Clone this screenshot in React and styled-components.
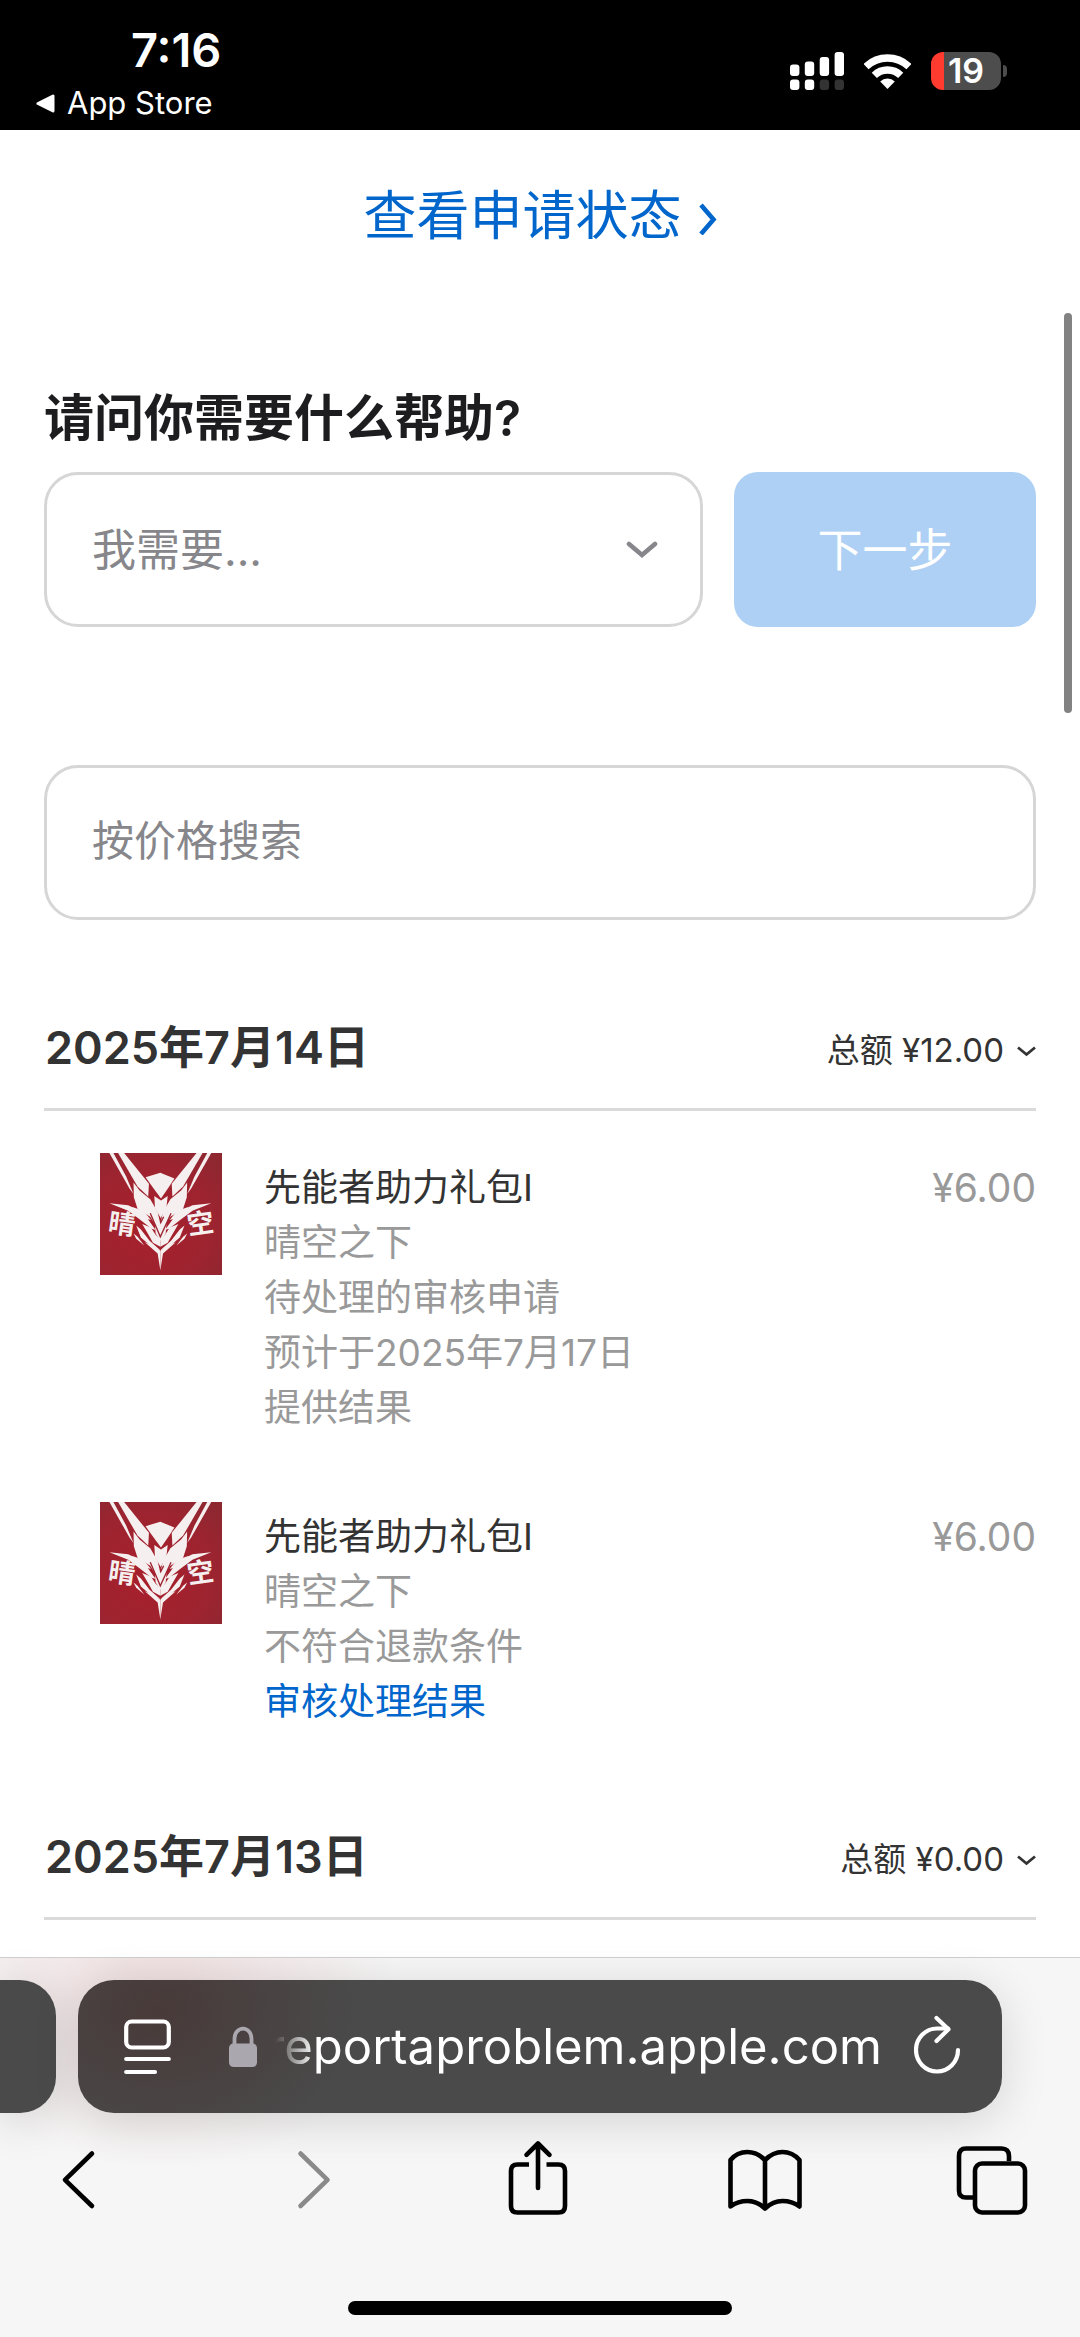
import React from "react";
import styled, { createGlobalStyle } from "styled-components";

const GlobalStyle = createGlobalStyle`
  * { box-sizing: border-box; }
  html, body { margin: 0; padding: 0; background: #fff; }
  body, button, input, select {
    font-family: Inter, "Noto Sans CJK SC", "Liberation Sans", sans-serif;
  }
  button { border: 0; padding: 0; background: none; color: inherit; }
  h1, h2, p, ul { margin: 0; padding: 0; }
  ul { list-style: none; }
  a { text-decoration: none; }
  svg { display: block; flex: none; }
`;

const Screen = styled.div`
  min-height: 100vh;
  display: flex;
  flex-direction: column;
  overflow: hidden;
`;

/* ---------- Status bar ---------- */

const StatusBar = styled.header`
  display: flex;
  justify-content: space-between;
  align-items: flex-start;
  height: 130px;
  padding: 26px 73px 0 36px;
  background: #000;
  color: #fff;
`;

const ClockColumn = styled.div`
  display: flex;
  flex-direction: column;
  gap: 6px;
`;

const Clock = styled.time`
  padding-left: 95px;
  font-size: 47px;
  font-weight: 600;
  line-height: 48px;
`;

const BackToApp = styled.a`
  display: flex;
  align-items: center;
  gap: 12px;
  color: #fff;
  font-size: 31px;
  line-height: 46px;
`;

const StatusIcons = styled.div`
  display: flex;
  align-items: center;
  gap: 20px;
  padding-top: 26px;
`;

const Battery = styled.div`
  display: flex;
  align-items: center;
  gap: 2px;
`;

const BatteryBody = styled.div`
  width: 70px;
  height: 38px;
  border-radius: 12px;
  background: linear-gradient(90deg, #ff3b30 13px, #4d4d4d 13px);
  font-size: 34px;
  font-weight: 600;
  line-height: 38px;
  text-align: center;
`;

const BatteryTip = styled.div`
  width: 4px;
  height: 12px;
  border-radius: 0 6px 6px 0;
  background: #4d4d4d;
`;

/* ---------- Page ---------- */

const Page = styled.main`
  position: relative;
  flex: 1 0 auto;
  padding: 54px 44px 37px;
`;

const ScrollThumb = styled.div`
  position: absolute;
  top: 183px;
  right: 8px;
  width: 8px;
  height: 400px;
  border-radius: 4px;
  background: #828282;
`;

const StatusLink = styled.a`
  display: flex;
  justify-content: center;
  align-items: center;
  gap: 16px;
  color: #0066cc;
  font-size: 53px;
  line-height: 64px;
`;

const Question = styled.label`
  display: block;
  margin-top: 140px;
  color: #1d1d1f;
  font-size: 50px;
  font-weight: 600;
  line-height: 60px;
`;

const RequestRow = styled.div`
  display: grid;
  grid-template-columns: 1fr 302px;
  gap: 31px;
  margin-top: 24px;
`;

const SelectBox = styled.div`
  position: relative;
  color: #86868b;

  svg {
    position: absolute;
    top: 69px;
    right: 45px;
    pointer-events: none;
  }
`;

const RequestSelect = styled.select`
  appearance: none;
  width: 100%;
  height: 155px;
  padding: 0 45px;
  border: 3px solid #d6d6d6;
  border-radius: 34px;
  background: #fff;
  color: #86868b;
  font-size: 44px;
`;

const NextButton = styled.button`
  height: 155px;
  padding-bottom: 4px;
  border-radius: 24px;
  background: #aed0f5;
  color: #fff;
  font-size: 45px;
`;

const PriceSearch = styled.input`
  display: block;
  width: 100%;
  height: 155px;
  margin-top: 138px;
  padding: 0 45px 4px;
  border: 3px solid #d6d6d6;
  border-radius: 34px;
  background: #fff;
  color: #1d1d1f;
  font-size: 42px;

  &::placeholder {
    color: #86868b;
    opacity: 1;
  }
`;

const DayHeader = styled.div`
  display: flex;
  justify-content: space-between;
  align-items: center;
  margin-top: 100px;
  padding-bottom: 32px;
  border-bottom: 3px solid #dadada;
  color: #333;
`;

const DayTitle = styled.h2`
  padding-left: 1px;
  font-size: 45px;
  font-weight: 600;
  line-height: 56px;
`;

const DayTotal = styled.button`
  display: flex;
  align-items: center;
  gap: 12px;
  padding-top: 4px;
  font-size: 33px;
  line-height: 52px;
`;

const PurchaseList = styled.ul`
  display: flex;
  flex-direction: column;
  gap: 67px;
  padding: 42px 0 0 56px;
`;

const Purchase = styled.li`
  display: grid;
  grid-template-columns: 122px 1fr auto;
  column-gap: 42px;
  align-items: start;
  color: #999;
  font-size: 37px;
  line-height: 55px;
`;

const PurchaseText = styled.div`
  padding-top: 7px;
`;

const PurchaseName = styled.p`
  color: #333;
`;

const ResultLink = styled.a`
  display: block;
  color: #0066cc;
`;

const Price = styled.p`
  padding-top: 7px;
  font-size: 39px;
`;

/* ---------- Browser bars ---------- */

const BrowserBar = styled.footer`
  flex: none;
  padding: 22px 0;
  border-top: 1px solid #cfcfcf;
  background:
    radial-gradient(ellipse 240px 170px at 160px 40px, rgba(215, 140, 145, 0.24), rgba(215, 140, 145, 0)),
    #f6f6f6;
`;

const TabStrip = styled.div`
  display: flex;
  gap: 22px;
  padding-right: 78px;
`;

const NeighbourTab = styled.div`
  flex: none;
  width: 56px;
  height: 133px;
  border-radius: 0 36px 36px 0;
  background: #4a4a4a;
  box-shadow: 0 8px 48px rgba(0, 0, 0, 0.14);
`;

const AddressBar = styled.div`
  flex: 1;
  min-width: 0;
  display: flex;
  align-items: center;
  height: 133px;
  padding: 0 41px 0 46px;
  border-radius: 36px;
  background:
    radial-gradient(ellipse 200px 150px at 80px 30px, #483a39, rgba(72, 58, 57, 0)),
    #4a4a4a;
  box-shadow: 0 8px 48px rgba(0, 0, 0, 0.14);
  color: #fff;
`;

const BarButton = styled.button`
  flex: none;
`;

const SiteAddress = styled.button`
  flex: 1;
  min-width: 0;
  display: flex;
  justify-content: space-between;
  align-items: center;
  padding: 0 32px 0 58px;
`;

const SiteName = styled.span`
  font-size: 49px;
  line-height: 70px;
  white-space: nowrap;
  mask-image: linear-gradient(90deg, transparent 8px, #000 48px);
`;

const NavBar = styled.nav`
  display: flex;
  justify-content: space-between;
  padding: 27px 50px 0 46px;
`;

const NavButton = styled.button`
  color: ${(p) => (p.disabled ? "#8a8a8a" : "#000")};
`;

const HomeIndicator = styled.div`
  width: 384px;
  height: 14px;
  margin: 85px auto 0;
  border-radius: 7px;
  background: #000;
`;

/* ---------- Drawings ---------- */

const SignalIcon = () => (
  <svg width="54" height="38" viewBox="0 0 54 38" fill="#fff">
    <rect x="0" y="12.5" width="9.4" height="11.5" rx="3" />
    <rect x="14.8" y="9.5" width="9.4" height="14.5" rx="3" />
    <rect x="29.7" y="5" width="9.4" height="19" rx="3" />
    <rect x="44.6" y="0" width="9.4" height="24" rx="3" />
    <rect x="0" y="27.5" width="9.4" height="10.5" rx="3" />
    <rect x="14.8" y="27.5" width="9.4" height="10.5" rx="3" />
    <rect x="29.7" y="27.5" width="9.4" height="10.5" rx="3" fill="#333" />
    <rect x="44.6" y="27.5" width="9.4" height="10.5" rx="3" fill="#333" />
  </svg>
);

const WifiIcon = () => (
  <svg width="47" height="35" viewBox="0 0 47 35">
    <g fill="none" stroke="#fff" strokeWidth="7.4">
      <path d="M2 12.7A31 31 0 0 1 45 12.7" />
      <path d="M10.3 21.3A19 19 0 0 1 36.7 21.3" />
    </g>
    <path d="M23.5 35L16.2 27.5A10.5 10.5 0 0 1 30.8 27.5Z" fill="#fff" />
  </svg>
);

const BackTriangle = () => (
  <svg width="19" height="19" viewBox="0 0 19 19">
    <path
      d="M2 9.5L17 2V17Z"
      fill="#fff"
      stroke="#fff"
      strokeWidth="3"
      strokeLinejoin="round"
    />
  </svg>
);

const LinkChevron = () => (
  <svg width="19" height="38" viewBox="0 0 19 38">
    <path d="M3 8L15.500 22.500L3 37" fill="none" stroke="currentColor" strokeWidth="4.6" />
  </svg>
);

const SelectChevron = () => (
  <svg width="32" height="18" viewBox="0 0 32 18">
    <path
      d="M3 3L16 14L29 3"
      fill="none"
      stroke="currentColor"
      strokeWidth="4.6"
      strokeLinecap="round"
    />
  </svg>
);

const TotalChevron = () => (
  <svg width="20" height="14" viewBox="0 0 20 14">
    <path d="M2 4.500L10.500 11.500L19 4.500" fill="none" stroke="currentColor" strokeWidth="2.800" />
  </svg>
);

const EmblemHalf = () => (
  <g>
    <path d="M28 0L40 0L78 70L100 122L88 106Z" />
    <path d="M54 0L72 0L146 92L144 130L112 100Z" />
    <path d="M100 88L118 112L150 138L172 176L180 212V238L150 190L112 166L101 132Z" />
    <path d="M28 150L84 156L118 172L142 196L166 230L154 226L118 198L84 172Z" />
    <path d="M94 160L130 172L152 200L130 194Z" />
    <path d="M126 212L152 222L166 244L180 256V280L158 268L146 246Z" />
    <path d="M108 216L122 228L148 262L180 290L154 280L122 252Z" />
    <path d="M134 266L164 278L180 292L180 350L172 300Z" />
    <path d="M100 240L112 250L132 276L108 256Z" />
  </g>
);

const EmblemText = styled.text`
  font-family: "Noto Sans CJK SC", sans-serif;
  font-size: 80px;
  font-weight: 700;
`;

const GameEmblem = () => (
  <svg width="122" height="122" viewBox="0 0 364 364">
    <defs>
      <radialGradient id="emblemRed" cx="0.4" cy="0.6" r="0.75">
        <stop offset="0" stopColor="#a81f2b" />
        <stop offset="0.7" stopColor="#9c2430" />
        <stop offset="1" stopColor="#8f2731" />
      </radialGradient>
    </defs>
    <rect width="364" height="364" fill="url(#emblemRed)" />
    <g fill="#f6efef">
      <EmblemHalf />
      <g transform="translate(360 0) scale(-1 1)">
        <EmblemHalf />
      </g>
      <path d="M136 72L180 59L222 76L204 104L182 136L160 106Z" />
      <path d="M162 128L182 142L202 128L198 164L181 194L164 164Z" />
      <path d="M181 214L200 190L196 240L181 262L166 240L162 190Z" />
      <path d="M180 210L190 190M150 180L180 250L212 180" fill="none" stroke="#9c2430" strokeWidth="4" />
      <EmblemText x="22" y="234" transform="rotate(8 22 234)">晴</EmblemText>
      <EmblemText x="264" y="244" transform="rotate(-8 264 244)">空</EmblemText>
    </g>
  </svg>
);

const ReaderIcon = () => (
  <svg width="47" height="56" viewBox="0 0 47 56" fill="none" stroke="#fff" strokeWidth="4.2" strokeLinecap="round">
    <rect x="2.2" y="2.500" width="42.600" height="26" rx="5.500" />
    <path d="M2.200 40H44.800M2.200 53H31" />
  </svg>
);

const LockIcon = () => (
  <svg width="28" height="41" viewBox="0 0 28 41">
    <path d="M5.500 20V12.500a8.500 9.800 0 0 1 17 0V20" fill="none" stroke="#aba7af" strokeWidth="3.800" />
    <rect x="0" y="17.500" width="28" height="23.500" rx="4.500" fill="#aba7af" />
  </svg>
);

const ReloadIcon = () => (
  <svg width="47" height="64" viewBox="0 0 47 64" fill="none" stroke="#fff" strokeWidth="4.200" strokeLinecap="round" strokeLinejoin="round">
    <path d="M44 35A21 21.500 0 1 1 23 13.500H34" />
    <path d="M22.500 3L34.500 14.200L22.500 26" />
  </svg>
);

const NavIcon = ({ children }) => (
  <svg
    width="76"
    height="76"
    viewBox="0 0 76 76"
    fill="none"
    stroke="currentColor"
    strokeWidth="4.600"
    strokeLinecap="round"
    strokeLinejoin="round"
  >
    {children}
  </svg>
);

const BackIcon = () => (
  <NavIcon>
    <path d="M46 13.500L19 39.800L46 66" />
  </NavIcon>
);

const ForwardIcon = () => (
  <NavIcon>
    <path d="M27.500 13.500L54.500 39.800L27.500 66" />
  </NavIcon>
);

const ShareIcon = () => (
  <NavIcon>
    <path d="M29 24.500H17.500Q11 24.500 11 31V66Q11 72.500 17.500 72.500H58.500Q65 72.500 65 66V31Q65 24.500 58.500 24.500H46.500" strokeLinecap="butt" />
    <path d="M38 48V4M26.500 14.800L38 3.500L49.500 14.800" />
  </NavIcon>
);

const BookIcon = () => (
  <NavIcon>
    <path d="M38 20Q30 12 20.500 12Q10 12 3.500 20V66.500Q11 61 20.500 61Q30 61 38 68.500Q46 61 55.500 61Q65 61 72.500 66.500V20Q65.500 12 55.500 12Q46 12 38 20V68" />
  </NavIcon>
);

const TabsIcon = () => (
  <NavIcon>
    <path d="M55 21V16Q55 8.500 47.500 8.500H12Q5 8.500 5 16V50.500Q5 57.500 12 57.500H19" strokeLinecap="butt" />
    <rect x="21" y="23.500" width="50" height="49" rx="7" />
  </NavIcon>
);

/* ---------- Data ---------- */

const purchases = [
  {
    id: 1,
    name: "先能者助力礼包I",
    app: "晴空之下",
    notes: ["待处理的审核申请", "预计于2025年7月17日", "提供结果"],
    price: "¥6.00",
  },
  {
    id: 2,
    name: "先能者助力礼包I",
    app: "晴空之下",
    notes: ["不符合退款条件"],
    link: "审核处理结果",
    price: "¥6.00",
  },
];

const Day = ({ date, total, children }) => (
  <section>
    <DayHeader>
      <DayTitle>{date}</DayTitle>
      <DayTotal type="button">
        总额 {total}
        <TotalChevron />
      </DayTotal>
    </DayHeader>
    {children}
  </section>
);

export default function App() {
  return (
    <Screen>
      <GlobalStyle />
      <StatusBar>
        <ClockColumn>
          <Clock>7:16</Clock>
          <BackToApp href="#app-store">
            <BackTriangle />
            App Store
          </BackToApp>
        </ClockColumn>
        <StatusIcons>
          <SignalIcon />
          <WifiIcon />
          <Battery>
            <BatteryBody>19</BatteryBody>
            <BatteryTip />
          </Battery>
        </StatusIcons>
      </StatusBar>

      <Page>
        <StatusLink href="#status">
          查看申请状态
          <LinkChevron />
        </StatusLink>

        <Question htmlFor="request">请问你需要什么帮助?</Question>
        <RequestRow>
          <SelectBox>
            <RequestSelect id="request" defaultValue="">
              <option value="">我需要...</option>
            </RequestSelect>
            <SelectChevron />
          </SelectBox>
          <NextButton type="button" disabled>
            下一步
          </NextButton>
        </RequestRow>

        <PriceSearch type="text" aria-label="按价格搜索" placeholder="按价格搜索" />

        <Day date="2025年7月14日" total="¥12.00">
          <PurchaseList>
            {purchases.map((item) => (
              <Purchase key={item.id}>
                <GameEmblem />
                <PurchaseText>
                  <PurchaseName>{item.name}</PurchaseName>
                  <p>{item.app}</p>
                  {item.notes.map((note) => (
                    <p key={note}>{note}</p>
                  ))}
                  {item.link && <ResultLink href="#result">{item.link}</ResultLink>}
                </PurchaseText>
                <Price>{item.price}</Price>
              </Purchase>
            ))}
          </PurchaseList>
        </Day>
        <Day date="2025年7月13日" total="¥0.00" />
        <ScrollThumb />
      </Page>

      <BrowserBar>
        <TabStrip>
          <NeighbourTab />
          <AddressBar>
            <BarButton type="button" aria-label="页面菜单">
              <ReaderIcon />
            </BarButton>
            <SiteAddress type="button">
              <LockIcon />
              <SiteName>reportaproblem.apple.com</SiteName>
            </SiteAddress>
            <BarButton type="button" aria-label="重新载入">
              <ReloadIcon />
            </BarButton>
          </AddressBar>
        </TabStrip>
        <NavBar>
          <NavButton type="button" aria-label="后退">
            <BackIcon />
          </NavButton>
          <NavButton type="button" aria-label="前进" disabled>
            <ForwardIcon />
          </NavButton>
          <NavButton type="button" aria-label="共享">
            <ShareIcon />
          </NavButton>
          <NavButton type="button" aria-label="书签">
            <BookIcon />
          </NavButton>
          <NavButton type="button" aria-label="标签页">
            <TabsIcon />
          </NavButton>
        </NavBar>
        <HomeIndicator />
      </BrowserBar>
    </Screen>
  );
}
